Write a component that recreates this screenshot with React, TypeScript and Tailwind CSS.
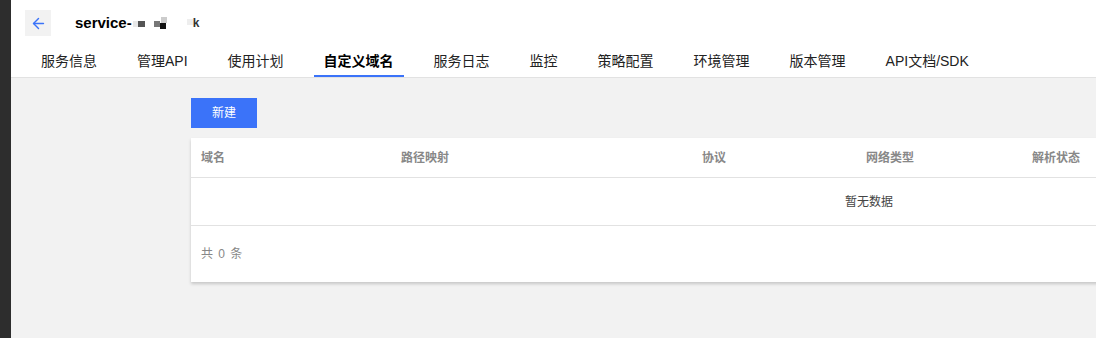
import { ArrowLeft } from 'lucide-react'

const TABS = ['服务信息', '管理API', '使用计划', '自定义域名', '服务日志', '监控', '策略配置', '环境管理', '版本管理', 'API文档/SDK']
const ACTIVE_TAB = '自定义域名'

const COLUMNS = [
  { label: '域名', width: 'w-[200px]' },
  { label: '路径映射', width: 'w-[301px]' },
  { label: '协议', width: 'w-[164px]' },
  { label: '网络类型', width: 'w-[166px]' },
  { label: '解析状态', width: 'flex-1' },
]

const FONT = "font-['Helvetica','Liberation_Sans','Noto_Sans_CJK_SC',sans-serif]"

const App = (): JSX.Element => {
  return (
    <div className={`flex h-[338px] w-[1096px] overflow-hidden ${FONT}`}>
      <div className="w-[11px] shrink-0 bg-[#2d2d2d]" />
      <div className="flex min-w-0 flex-1 flex-col bg-[#f2f2f2]">
        {/* header */}
        <div className="border-b border-[#e2e2e2] bg-white">
          <div className="flex h-[46px] items-start pl-[14px] pt-[10px]">
            <button className="flex h-[26px] w-[26px] items-center justify-center bg-[#f2f2f2] text-[#3b73f9]">
              <ArrowLeft size={17} strokeWidth={2} />
            </button>
            <div className="ml-[24px] flex h-[26px] items-center text-[15px] font-bold text-black">
              service-
              {/* blurred part of the name */}
              <span className="ml-[1px] mt-[2px] inline-block h-[6px] w-[5px] bg-[#e8e8e8]" />
              <span className="mt-[2px] inline-block h-[6px] w-[7px] bg-[#555]" />
              <span className="ml-[9px] mt-[2px] inline-block h-[6px] w-[6px] bg-[#777]" />
              <span className="flex flex-col">
                <span className="ml-[1px] inline-block h-[6px] w-[6px] bg-[#ccc]" />
                <span className="inline-block h-[6px] w-[6px] bg-[#111]" />
              </span>
              <span className="ml-[20px] mb-[3px] inline-block h-[6px] w-[6px] bg-[#eee]" />
              <span className="text-[12px] font-bold text-[#333]">k</span>
            </div>
          </div>
          <div className="flex h-[31px] gap-[20px] pl-[20px]">
            {TABS.map((tab) => {
              const active = tab === ACTIVE_TAB
              return (
                <div
                  key={tab}
                  className={`flex items-center border-b-2 px-[10px] pt-[1px] text-[14px] ${
                    active ? 'border-[#3b73f9] font-bold text-black' : 'border-transparent text-[#222]'
                  }`}
                >
                  {tab}
                </div>
              )
            })}
          </div>
        </div>

        {/* content */}
        <div className="flex flex-col pl-[180px] pt-[20px]">
          <button className="flex h-[30px] w-[66px] items-center justify-center bg-[#3b73f9] text-[12px] text-white">
            新建
          </button>
          <div className="mt-[10px] w-[1356px] shrink-0 bg-white shadow-[0_2px_3px_rgba(0,0,0,0.18)]">
            <div className="flex h-[40px] items-center border-b border-[#e2e2e2] text-[12px] font-bold text-[#888]">
              {COLUMNS.map((col) => (
                <div key={col.label} className={`${col.width} px-[10px]`}>
                  {col.label}
                </div>
              ))}
            </div>
            <div className="flex h-[48px] items-center justify-center border-b border-[#e2e2e2] text-[12px] text-[#444]">
              暂无数据
            </div>
            <div className="flex h-[56px] items-center px-[10px] text-[12px] tracking-[1px] text-[#888]">
              共 0 条
            </div>
          </div>
        </div>
      </div>
    </div>
  )
}

export default App
